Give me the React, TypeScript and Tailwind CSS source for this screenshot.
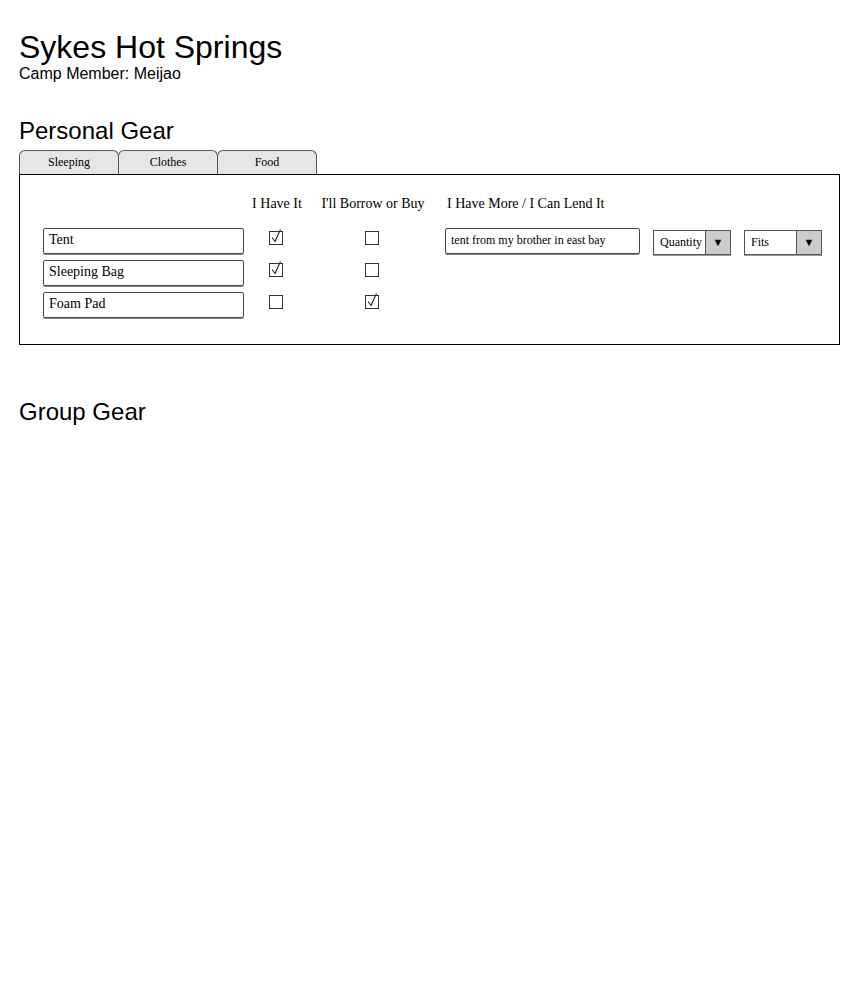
import React from 'react';

const SANS = "font-['Liberation_Sans',Arial,sans-serif]";
const SERIF = "font-['Liberation_Serif','Times_New_Roman',serif]";

type GearRow = { name: string; have: boolean; borrow: boolean };

const ROWS: GearRow[] = [
  { name: 'Tent', have: true, borrow: false },
  { name: 'Sleeping Bag', have: true, borrow: false },
  { name: 'Foam Pad', have: false, borrow: true },
];

const CheckBox: React.FC<{ checked: boolean }> = ({ checked }) => (
  <svg width="18" height="18" viewBox="0 0 18 18" className="block">
    <rect x="1.5" y="3.5" width="13" height="13" fill="white" stroke="#333" strokeWidth="1" />
    {checked && (
      <path d="M4 9.5 L7 13.5 L12.5 1.5" fill="none" stroke="#222" strokeWidth="1.1" strokeLinejoin="round" />
    )}
  </svg>
);

const Select: React.FC<{ label: string }> = ({ label }) => (
  <div className="flex h-[25px] w-[78px] border border-[#555] bg-white shadow-[0_1px_0_#999]">
    <div className={`flex-1 pl-[6px] text-[12px] leading-[23px] ${SERIF}`}>{label}</div>
    <div className="flex w-[25px] items-center justify-center border-l border-[#555] bg-[#cccccc] text-[11px] leading-none">▼</div>
  </div>
);

const App: React.FC = () => {
  return (
    <div className={`min-h-[1000px] bg-white px-[19px] text-black ${SANS}`}>
      <h1 className="pt-[29px] text-[32px] leading-[36px]">Sykes Hot Springs</h1>
      <div className="text-[16px] leading-[18px]">Camp Member: Meijao</div>

      <h2 className="mt-[34px] text-[24px] leading-[28px]">Personal Gear</h2>

      <div className="mt-[5px] flex">
        {['Sleeping', 'Clothes', 'Food'].map(tab => (
          <div
            key={tab}
            className={`-mr-px h-[24px] w-[100px] rounded-t-[6px] border border-b-0 border-[#555] bg-[#e6e6e6] text-center text-[12px] leading-[22px] ${SERIF}`}
          >
            {tab}
          </div>
        ))}
      </div>

      <div className={`h-[171px] w-[821px] border border-black ${SERIF}`}>
        <div className="mt-[20px] flex text-[14px] leading-[18px]">
          <div className="w-[224px]" />
          <div className="w-[66px] text-center">I Have It</div>
          <div className="w-[126px] text-center">I'll Borrow or Buy</div>
          <div className="pl-[11px]">I Have More / I Can Lend It</div>
        </div>

        <div className="mt-[15px] flex flex-col gap-[6px]">
          {ROWS.map((row, i) => (
            <div key={row.name} className="flex h-[26px] items-start">
              <div className="ml-[23px] h-[26px] w-[201px] rounded-[2px] border border-[#444] pl-[5px] text-[14px] leading-[22px] shadow-[0_1px_0_#888]">
                {row.name}
              </div>
              <div className="flex w-[66px] justify-center">
                <CheckBox checked={row.have} />
              </div>
              <div className="flex w-[126px] justify-center">
                <CheckBox checked={row.borrow} />
              </div>
              {i === 0 && (
                <div className="ml-[9px] flex items-start gap-[13px]">
                  <div className="h-[26px] w-[195px] rounded-[2px] border border-[#444] pl-[5px] text-[12px] leading-[22px] shadow-[0_1px_0_#888]">
                    tent from my brother in east bay
                  </div>
                  <div className="pt-[2px]">
                    <Select label="Quantity" />
                  </div>
                  <div className="pt-[2px]">
                    <Select label="Fits" />
                  </div>
                </div>
              )}
            </div>
          ))}
        </div>
      </div>

      <h2 className="mt-[53px] text-[24px] leading-[28px]">Group Gear</h2>
    </div>
  );
};

export default App;
